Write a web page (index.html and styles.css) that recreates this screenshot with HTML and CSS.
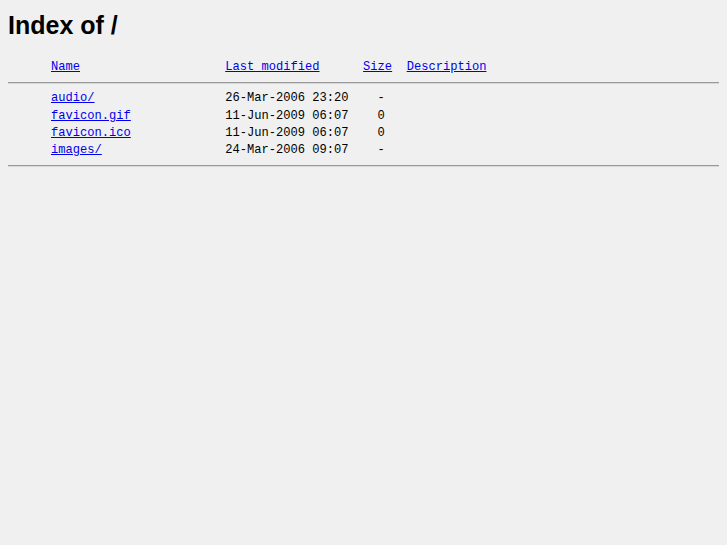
FILE: index.html
```html
<!DOCTYPE html>
<html lang="en">
<head>
    <meta charset="UTF-8">
    <title>Index of /</title>
    <link rel="stylesheet" href="styles.css">
</head>
<body>
    <h1 class="title">Index of /</h1>
    <pre class="listing"><span class="icon"></span><a href="?C=N;O=D">Name</a>                    <a href="?C=M;O=A">Last modified</a>      <a href="?C=S;O=A">Size</a>  <a href="?C=D;O=A">Description</a></pre>
    <hr class="rule">
    <pre class="listing rows"><span class="icon"></span><a href="audio/">audio/</a>                  26-Mar-2006 23:20    -   
<span class="icon"></span><a href="favicon.gif">favicon.gif</a>             11-Jun-2009 06:07    0   
<span class="icon"></span><a href="favicon.ico">favicon.ico</a>             11-Jun-2009 06:07    0   
<span class="icon"></span><a href="images/">images/</a>                 24-Mar-2006 09:07    -   </pre>
    <hr class="rule">
</body>
</html>
```
FILE: styles.css
```css
body {
  margin: 8px;
  background-color: #f0f0f0;
  color: #000;
}
.title {
  font-family: "Liberation Sans", Arial, sans-serif;
  font-size: 25px;
  font-weight: bold;
  margin: 3px 0 0 0;
  line-height: 28px;
}
.listing {
  font-family: "Liberation Mono", "Courier New", monospace;
  font-size: 12.1px;
  line-height: 17.3px;
  margin: 20px 0 0 0;
}
.listing.rows {
  margin-top: 6px;
}
.listing a {
  color: #0000ee;
}
.icon {
  display: inline-block;
  width: 43px;
}
.rule {
  margin: 6px 0 0 0;
  border: 0;
  border-top: 1px solid #9a9a9a;
  border-bottom: 1px solid #d8d8d8;
}
```
